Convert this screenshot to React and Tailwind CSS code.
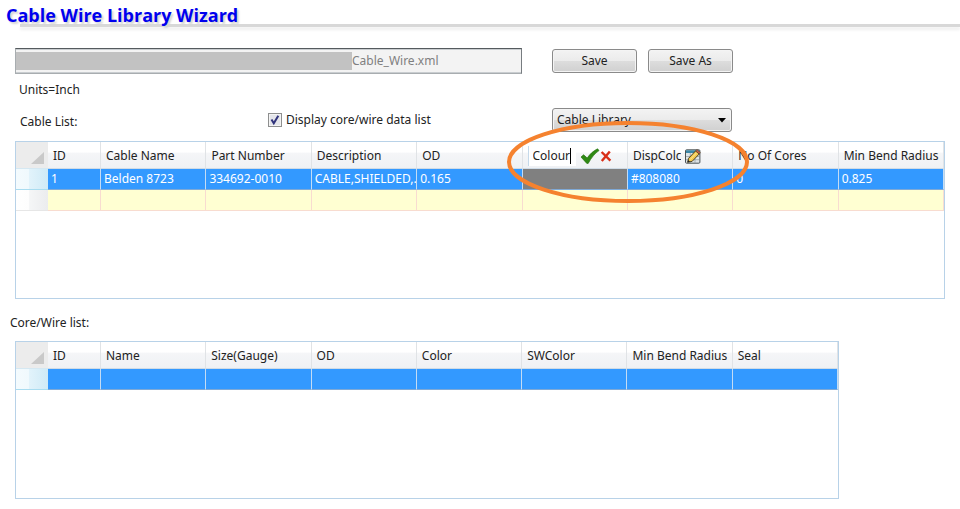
// =====================================
// Cable Wire Library Wizard
// Cable grid on top, core/wire grid below
// =====================================

import React, { useState } from "react";

const CABLE_COLUMNS = [
  "ID",
  "Cable Name",
  "Part Number",
  "Description",
  "OD",
  "Colour",
  "DispColc",
  "No Of Cores",
  "Min Bend Radius",
];

const CABLES = [
  ["1", "Belden 8723", "334692-0010", "CABLE,SHIELDED,.", "0.165", "", "#808080", "0", "0.825"],
];

const CORE_COLUMNS = [
  "ID",
  "Name",
  "Size(Gauge)",
  "OD",
  "Color",
  "SWColor",
  "Min Bend Radius",
  "Seal",
];

const BUTTON =
  "h-6 rounded-[3px] border border-[#8a8a8a] bg-[linear-gradient(#f3f3f3_0%,#ebebeb_50%,#dddddd_50%,#d0d0d0_100%)] shadow-[inset_0_0_0_1px_#f4f4f4]";

function CheckIcon() {
  return (
    <svg width="20" height="16" viewBox="0 0 20 16" aria-hidden="true">
      <path d="M1 9 3.600 6.800 7.200 10C10 6 13.400 2.800 17.600 .8L19 2.600C14.800 5.400 11.400 9.600 8.200 15.400H6.800Z" fill="#2f8a14" stroke="#2a7512" strokeWidth=".7" />
    </svg>
  );
}

function CrossIcon() {
  return (
    <svg width="12" height="12" viewBox="0 0 12 12" aria-hidden="true">
      <path d="M1.600 2 10.400 10.600M9.800 1.400 1.800 11" fill="none" stroke="#d92f18" strokeWidth="2.400" />
    </svg>
  );
}

function EditIcon() {
  return (
    <svg width="16" height="15" viewBox="0 0 16 15" aria-hidden="true">
      <rect x=".5" y=".8" width="14.400" height="13.400" rx="1" fill="#dfe5e8" stroke="#4b5356" />
      <path d="M1 1.300h13.400v2.700H1z" fill="#3b87a8" />
      <path d="M1 7.500h13M1 10.700h13M5.300 4v10M10 4v10" stroke="#8f9ba0" strokeWidth=".7" />
      <path d="M2.600 13.300 3.600 9.300 10.600 1.900 14.200 5 7.200 12.300Z" fill="#f2c94e" stroke="#4e4222" />
      <path d="M5.200 10.600 11.800 3.700" stroke="#fbe69a" strokeWidth="1" />
      <path d="M10.600 1.900 12 .6 15.400 3.600 14.200 5Z" fill="#cc5f50" stroke="#4e4222" strokeWidth=".6" />
      <path d="M2.600 13.300 3.200 10.900 5.100 12.700Z" fill="#222" />
    </svg>
  );
}

function CornerHeader() {
  return (
    <th className="bg-[#ececec] border-b border-[#d5e8f2] p-0 pr-1 pb-1 align-bottom">
      <svg className="ml-auto block" width="13" height="12" viewBox="0 0 13 12" aria-hidden="true">
        <path d="M13 0V12H0Z" fill="#c9c9c9" />
      </svg>
    </th>
  );
}

// Grid header; the Colour column is in edit mode
function HeaderCell({ label }) {
  const [name, setName] = useState(label);

  let content = label;
  if (label === "Colour") {
    content = (
      <div className="flex items-center">
        <div className="flex h-5 w-12 items-center border-l border-[#c5d9ea] bg-white pl-1">
          <input
            aria-label="Column name"
            value={name}
            onChange={(e) => setName(e.target.value)}
            className="w-[37px] bg-transparent p-0 outline-none"
          />
          <span className="h-4 w-px shrink-0 bg-black" />
        </div>
        <button aria-label="Accept" className="ml-1"><CheckIcon /></button>
        <button aria-label="Cancel"><CrossIcon /></button>
      </div>
    );
  } else if (label === "DispColc") {
    content = (
      <div className="flex items-center">
        <span className="w-12 overflow-hidden">{label}</span>
        <button aria-label="Edit column name" className="ml-1"><EditIcon /></button>
      </div>
    );
  }

  return (
    <th className="h-[27px] overflow-hidden border-r border-b border-r-[#e0e3e6] border-b-[#cfdbe6] bg-[linear-gradient(#ffffff_0%,#ffffff_40%,#f5f6f8_41%,#eff1f4_100%)] p-0 pt-0.5 pl-[5px] text-left font-normal whitespace-nowrap">
      {content}
    </th>
  );
}

function Grid({ label, columns, rows, newRow }) {
  return (
    <table aria-label={label} className="w-full table-fixed border-separate border-spacing-0">
      <colgroup>
        <col className="w-8" />
        <col className="w-[53px]" />
        {columns.slice(1).map((c) => (
          <col key={c} />
        ))}
      </colgroup>
      <thead>
        <tr>
          <CornerHeader />
          {columns.map((c) => (
            <HeaderCell key={c} label={c} />
          ))}
        </tr>
      </thead>
      <tbody>
        {rows.map((row, i) => (
          <tr key={i} className="text-white">
            <td className="border-b border-[#a9dcf0] bg-[linear-gradient(90deg,#f4fbfe_0%,#f0f9fd_40%,#e2f3fb_41%,#cfeaf6_100%)] p-0" />
            {row.map((value, j) => (
              <td
                key={j}
                className={`h-[21px] overflow-hidden border-r border-b border-r-[#c4dcf4] border-b-[#7fa9d6] p-0 pl-[3px] whitespace-nowrap ${
                  columns[j] === "Colour" ? "bg-[#808080]" : "bg-[#3399ff]"
                }`}
              >
                {value}
              </td>
            ))}
          </tr>
        ))}
        {newRow && (
          <tr>
            <td className="border-b border-[#e6e6e6] bg-[linear-gradient(90deg,#ffffff_0%,#fdfdfd_40%,#f5f6f7_41%,#ebecee_100%)] p-0" />
            {columns.map((c) => (
              <td key={c} className="h-[21px] border-r border-b border-[#f8dcd0] bg-[#ffffd2] p-0" />
            ))}
          </tr>
        )}
      </tbody>
    </table>
  );
}

export default function App() {
  const [showCores, setShowCores] = useState(true);

  return (
    <div className="relative bg-white pb-2.5 font-['Noto_Sans','Open_Sans',sans-serif] text-[12px] leading-4 text-[#222]">

      {/* ===== TITLE ===== */}
      <header className="h-12">
        <h1 className="relative h-6 pl-1.5 pt-[3px] font-['Open_Sans',sans-serif] text-[18px] leading-6 font-bold text-[#0000ee] [text-shadow:2px_2px_2px_#d4d4d4]">
          Cable Wire Library Wizard
        </h1>
        <div className="ml-5 h-[3px] bg-[#d8d8d8] shadow-[0_3px_3px_#efefef]" />
      </header>

      {/* ===== FILE + OPTIONS ===== */}
      <div className="flex items-center pl-[15px]">
        <div className="flex h-[26px] w-[507px] items-center border border-[#a8adb0] border-t-[#555b5e] border-r-[#777c80] bg-[#f3f3f3] py-[3px] shadow-[inset_0_1px_0_#c9cdd0,inset_0_-1px_0_#c9cdd0]">
          <div className="h-full w-[336px] bg-[#c2c2c2]" />
          <input
            aria-label="Library file"
            readOnly
            value="Cable_Wire.xml"
            className="min-w-0 flex-1 bg-transparent p-0 text-[#808080] outline-none"
          />
        </div>
        <button className={`${BUTTON} ml-[30px] w-[85px]`}>Save</button>
        <button className={`${BUTTON} ml-[11px] w-[85px]`}>Save As</button>
      </div>

      <div className="pt-2 pl-[19px]">Units=Inch</div>

      <div className="mt-2.5 flex h-6 items-center pl-5">
        <div className="w-[248px] pt-1">Cable List:</div>
        <label className="flex w-[284px] items-center gap-1">
          <span className="relative flex">
            <input
              type="checkbox"
              checked={showCores}
              onChange={(e) => setShowCores(e.target.checked)}
              className="size-3.5 appearance-none border border-[#8e8f8f] bg-[#e4e5ea] shadow-[inset_0_0_0_1px_#f4f4f4]"
            />
            {showCores && (
              <svg className="pointer-events-none absolute inset-0" width="14" height="14" viewBox="0 0 14 14" aria-hidden="true">
                <path d="M3.500 6.500 5.800 10.300 10.300 2.800" fill="none" stroke="#31347c" strokeWidth="2" />
              </svg>
            )}
          </span>
          Display core/wire data list
        </label>
        <div className="relative w-[180px]">
          <select aria-label="Library type" className={`${BUTTON} block w-full appearance-none pl-1`}>
            <option>Cable Library</option>
          </select>
          <svg className="pointer-events-none absolute top-2.5 right-1.5" width="8" height="5" viewBox="0 0 8 5" aria-hidden="true">
            <path d="M0 0H8L4 4.500Z" fill="#000" />
          </svg>
        </div>
      </div>

      {/* ===== CABLE GRID ===== */}
      <div className="mt-[9px] mr-[15px] ml-[15px] min-h-[158px] border border-[#b8d2e8]">
        <Grid label="Cable list" columns={CABLE_COLUMNS} rows={CABLES} newRow />
      </div>

      {/* ===== CORE/WIRE GRID ===== */}
      <div className="mt-4 pl-2.5">Core/Wire list:</div>
      <div className="mt-2.5 mr-[121px] ml-[15px] min-h-[158px] border border-[#b8d2e8]">
        <Grid label="Core/wire list" columns={CORE_COLUMNS} rows={[CORE_COLUMNS.map(() => "")]} />
      </div>

      {/* Callout around the column rename controls */}
      <svg className="pointer-events-none absolute top-[120px] left-[506px]" width="244" height="84" viewBox="0 0 244 84" aria-hidden="true">
        <ellipse cx="122" cy="42" rx="119" ry="39" fill="none" stroke="#f5822f" strokeWidth="4" />
      </svg>
    </div>
  );
}
